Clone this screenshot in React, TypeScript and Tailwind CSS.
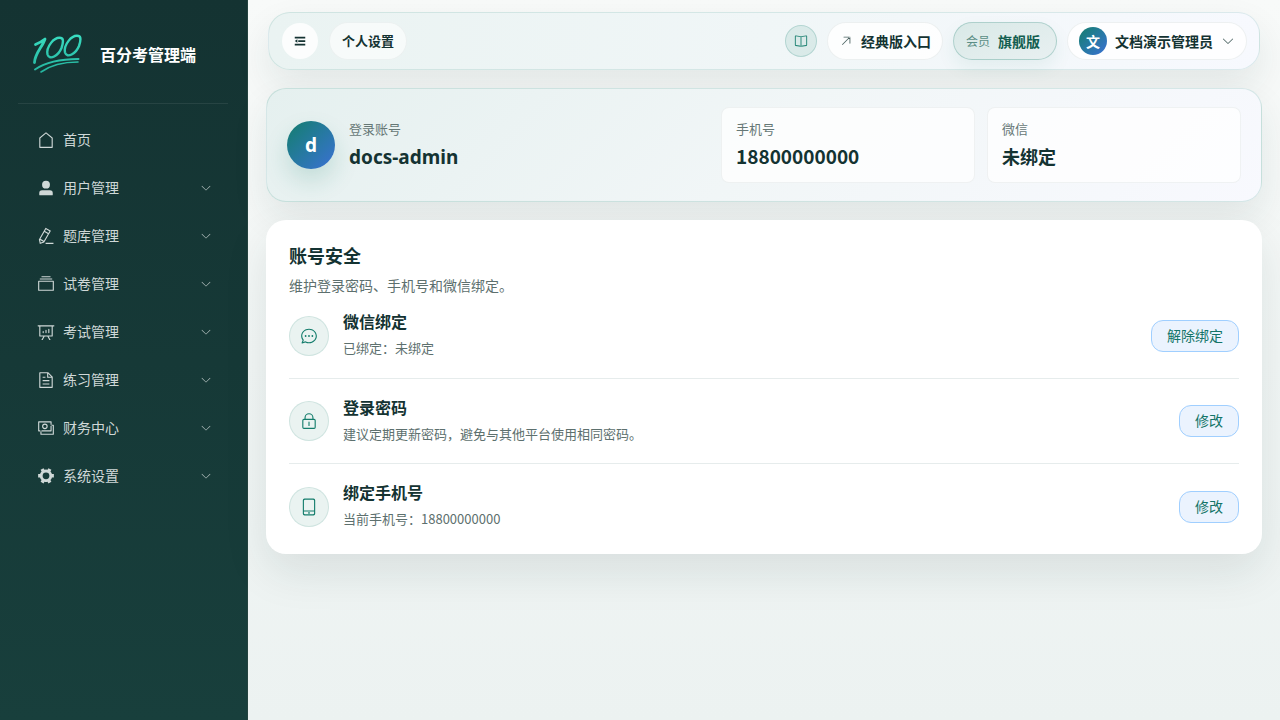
import type { ReactNode } from 'react';

const PATHS: Record<string, string> = {
  house:
    'M192 413.952V896h640V413.952L512 147.328 192 413.952zM139.52 374.4l352-293.312a32 32 0 0 1 40.96 0l352 293.312A32 32 0 0 1 896 398.976V928a32 32 0 0 1-32 32H160a32 32 0 0 1-32-32V398.976a32 32 0 0 1 11.52-24.576z',
  user: 'M288 320a224 224 0 1 0 448 0 224 224 0 1 0-448 0zm544 608H160a32 32 0 0 1-32-32v-96a160 160 0 0 1 160-160h448a160 160 0 0 1 160 160v96a32 32 0 0 1-32 32z',
  pen: 'm199.04 672.64 193.984 112 224-387.968-193.92-112-224 388.032zm-23.872 60.16 32.896 148.288 144.896-45.696L175.168 732.8zM455.04 229.248l193.92 112 56.704-98.112-193.984-112-56.64 98.112zM104.32 708.8l384-665.024 304.768 175.936L409.152 884.8h.064l-248.448 78.336L104.32 708.8zm384 254.272v-64h448v64h-448z',
  files:
    'M128 384v448h768V384H128zm-32-64h832a32 32 0 0 1 32 32v512a32 32 0 0 1-32 32H96a32 32 0 0 1-32-32V352a32 32 0 0 1 32-32zm64-128h704v64H160zm96-128h512v64H256z',
  board:
    'm665.216 768 110.848 192h-73.856L591.36 768H433.024L322.176 960H248.32l110.848-192H160a32 32 0 0 1-32-32V192H64a32 32 0 0 1 0-64h896a32 32 0 1 1 0 64h-64v544a32 32 0 0 1-32 32H665.216zM832 192H192v512h640V192zM352 448a32 32 0 0 1 32 32v64a32 32 0 0 1-64 0v-64a32 32 0 0 1 32-32zm160-64a32 32 0 0 1 32 32v128a32 32 0 0 1-64 0V416a32 32 0 0 1 32-32zm160-64a32 32 0 0 1 32 32v192a32 32 0 1 1-64 0V352a32 32 0 0 1 32-32z',
  document:
    'M832 384H576V128H192v768h640V384zm-26.496-64L640 154.496V320h165.504zM160 64h480l256 256v608a32 32 0 0 1-32 32H160a32 32 0 0 1-32-32V96a32 32 0 0 1 32-32zm160 448h384v64H320v-64zm0-192h160v64H320v-64zm0 384h384v64H320v-64z',
  money:
    'M256 640v192h640V384H768v-64h160a32 32 0 0 1 32 32v512a32 32 0 0 1-32 32H224a32 32 0 0 1-32-32V640h64zM128 192v448h640V192H128zm-32-64h704a32 32 0 0 1 32 32v512a32 32 0 0 1-32 32H96a32 32 0 0 1-32-32V160a32 32 0 0 1 32-32zM448 576a160 160 0 1 1 0-320 160 160 0 0 1 0 320zm0-64a96 96 0 1 0 0-192 96 96 0 0 0 0 192z',
  tools:
    'M764.416 254.72a351.68 351.68 0 0 1 86.336 149.184H960v192.064H850.752a351.68 351.68 0 0 1-86.336 149.312l54.72 94.72-166.272 96-54.592-94.72a352.64 352.64 0 0 1-172.48 0L371.136 936l-166.272-96 54.72-94.72a351.68 351.68 0 0 1-86.336-149.312H64v-192h109.248a351.68 351.68 0 0 1 86.336-149.312L204.8 160l166.208-96h.192l54.656 94.592a352.64 352.64 0 0 1 172.48 0L652.8 64h.128L819.2 160l-54.72 94.72zM704 499.968a192 192 0 1 0-384 0 192 192 0 0 0 384 0z',
  down: 'M831.872 340.864 512 652.672 192.128 340.864a30.592 30.592 0 0 0-42.752 0 29.12 29.12 0 0 0 0 41.6L489.664 714.24a32 32 0 0 0 44.672 0l340.288-331.712a29.12 29.12 0 0 0 0-41.728 30.592 30.592 0 0 0-42.752 0z',
  fold: 'M896 192H128v128h768V192zm0 256H384v128h512V448zm0 256H128v128h768V704zM320 384 128 512l192 128V384z',
  reading:
    'm512 863.36 384-54.848v-638.72L525.568 222.72a96 96 0 0 1-27.136 0L128 169.792v638.72l384 54.848zM137.024 106.432l370.432 52.928a32 32 0 0 0 9.088 0l370.432-52.928A64 64 0 0 1 960 169.792v638.72a64 64 0 0 1-54.976 63.36l-388.48 55.488a32 32 0 0 1-9.088 0l-388.48-55.488A64 64 0 0 1 64 808.512v-638.72a64 64 0 0 1 73.024-63.36zM480 192h64v704h-64z',
  topRight:
    'M768 256H353.6a32 32 0 1 1 0-64H800a32 32 0 0 1 32 32v448a32 32 0 0 1-64 0V256zM777.344 201.344a32 32 0 0 1 45.312 45.312l-544 544a32 32 0 0 1-45.312-45.312l544-544z',
  chat: 'm174.72 855.68 135.296-45.12 23.68 11.84C388.096 849.536 448.576 864 512 864c211.84 0 384-166.784 384-352S723.84 160 512 160 128 326.784 128 512c0 69.12 24.96 139.264 70.848 199.232l22.08 28.8-46.272 115.584zm-45.248 82.56A32 32 0 0 1 89.6 896l58.368-145.92C94.72 680.32 64 596.864 64 512 64 299.904 256 96 512 96s448 203.904 448 416-192 416-448 416a461.056 461.056 0 0 1-206.912-48.384l-175.616 58.56zM512 563.2a51.2 51.2 0 1 1 0-102.4 51.2 51.2 0 0 1 0 102.4zM704 563.2a51.2 51.2 0 1 1 0-102.4 51.2 51.2 0 0 1 0 102.4zM320 563.2a51.2 51.2 0 1 1 0-102.4 51.2 51.2 0 0 1 0 102.4z',
  lock: 'M224 448a32 32 0 0 0-32 32v384a32 32 0 0 0 32 32h576a32 32 0 0 0 32-32V480a32 32 0 0 0-32-32H224zm0-64h576a96 96 0 0 1 96 96v384a96 96 0 0 1-96 96H224a96 96 0 0 1-96-96V480a96 96 0 0 1 96-96zM512 544a32 32 0 0 1 32 32v192a32 32 0 1 1-64 0V576a32 32 0 0 1 32-32zm192-160v-64a192 192 0 1 0-384 0v64h384zM512 64a256 256 0 0 1 256 256v64H256V320A256 256 0 0 1 512 64z',
  phone:
    'M224 768v96.064a64 64 0 0 0 64 64h448a64 64 0 0 0 64-64V768H224zm0-64h576V160a64 64 0 0 0-64-64H288a64 64 0 0 0-64 64v544zm32 288a96 96 0 0 1-96-96V128a96 96 0 0 1 96-96h512a96 96 0 0 1 96 96v768a96 96 0 0 1-96 96H256zm304-144a48 48 0 1 1-96 0 48 48 0 0 1 96 0z',
};

function Icon({ name, className }: { name: string; className: string }) {
  return (
    <svg viewBox="0 0 1024 1024" fill="currentColor" fillRule="evenodd" aria-hidden="true" className={`shrink-0 ${className}`}>
      <path d={PATHS[name]} />
    </svg>
  );
}

function Logo() {
  return (
    <svg viewBox="0 0 54 44" fill="none" strokeLinecap="round" strokeLinejoin="round" aria-hidden="true" className="h-11 w-[54px] shrink-0">
      <defs>
        <linearGradient id="logo" x1="0" y1="0" x2="0" y2="44" gradientUnits="userSpaceOnUse">
          <stop offset="0" stopColor="#3be0c4" />
          <stop offset="1" stopColor="#22b09a" />
        </linearGradient>
      </defs>
      <g stroke="url(#logo)">
        <path strokeWidth="2.8" d="M5.500 12.500C9 11 12.500 9 15 7 12.500 15 5 21 4.500 30.500" />
        <path strokeWidth="2.4" d="M31 6C24 4.500 16 15 17.500 22.500c2 6.500 11 1 14-6.500C33.500 10 33.500 6.500 31 6z" />
        <path strokeWidth="2.4" d="M48.500 4C41.500 2.500 33.500 13 35 20.500c2 6.500 11 1 14-6.500C51 8 51 4.500 48.500 4z" />
        <path strokeWidth="2" d="M5 37.500C16 30 30 27 48.500 27" />
        <path strokeWidth="1.600" d="M11 40C20 33.500 33 30 48 30" />
      </g>
    </svg>
  );
}

const MENU = [
  { icon: 'house', label: '首页', group: false },
  { icon: 'user', label: '用户管理', group: true },
  { icon: 'pen', label: '题库管理', group: true },
  { icon: 'files', label: '试卷管理', group: true },
  { icon: 'board', label: '考试管理', group: true },
  { icon: 'document', label: '练习管理', group: true },
  { icon: 'money', label: '财务中心', group: true },
  { icon: 'tools', label: '系统设置', group: true },
];

const SECURITY = [
  { icon: 'chat', title: '微信绑定', text: '已绑定：未绑定', action: '解除绑定' },
  { icon: 'lock', title: '登录密码', text: '建议定期更新密码，避免与其他平台使用相同密码。', action: '修改' },
  { icon: 'phone', title: '绑定手机号', text: '当前手机号：18800000000', action: '修改' },
];

function Sidebar() {
  return (
    <aside className="w-[248px] shrink-0 border-r border-[#24433f] bg-linear-to-b from-[#143332] to-[#183f3c] px-[18px]">
      <div className="mr-px flex h-[104px] items-center gap-4 border-b border-white/8 pl-3 pt-1">
        <Logo />
        <span className="text-base font-bold text-white">百分考管理端</span>
      </div>
      <nav className="pt-3">
        <ul>
          {MENU.map((item) => (
            <li key={item.label}>
              <button type="button" className="flex h-12 w-full items-center gap-2 pl-[19px] pr-[17px] text-left text-sm text-[#cfd8d7]">
                <Icon name={item.icon} className="size-[18px]" />
                <span className="flex-1 pb-0.5">{item.label}</span>
                {item.group && <Icon name="down" className="size-3 opacity-85" />}
              </button>
            </li>
          ))}
        </ul>
      </nav>
    </aside>
  );
}

function TopBar() {
  return (
    <header className="mx-0.5 flex h-[58px] items-center rounded-[22px] border border-[#147d6c]/12 bg-linear-to-r from-[#eaf3f2] via-[#f0f6f7] to-[#f7f9fe] pl-[13px] pr-3 shadow-[0_16px_36px_rgba(20,51,50,0.09)]">
      <button type="button" aria-label="折叠菜单" className="flex size-9 items-center justify-center rounded-full bg-white/85 text-[#143332]">
        <Icon name="fold" className="size-[14px]" />
      </button>
      <h1 className="ml-[11px] flex h-[38px] items-center rounded-full border border-[#143332]/5 bg-white/60 px-3 text-[13px] font-bold text-[#143332]">个人设置</h1>
      <div className="ml-auto flex items-center gap-[10px]">
        <button type="button" aria-label="文档" className="flex size-8 items-center justify-center rounded-full border border-[#147d6c]/20 bg-[#147d6c]/10 text-[#147d6c]">
          <Icon name="reading" className="size-[14px]" />
        </button>
        <a href="#classic" className="flex h-[38px] items-center gap-2 rounded-full border border-[#143332]/7 bg-white/85 px-[11px] text-sm font-bold text-[#143332]">
          <Icon name="topRight" className="size-[14px] text-[#4a6261]" />
          经典版入口
        </a>
        <button type="button" className="flex h-[38px] items-center gap-2 rounded-full border border-[#147d6c]/25 bg-linear-to-br from-[#d9e9e7] to-[#e8f0f1] pl-3 pr-4 text-[#125e50] shadow-[0_8px_18px_rgba(20,125,108,0.08)]">
          <span className="text-xs text-[#5b8e86]">会员</span>
          <span className="text-sm font-bold">旗舰版</span>
        </button>
        <button type="button" className="flex h-[38px] items-center rounded-full border border-[#143332]/7 bg-white/85 px-[11px] text-sm font-bold text-[#143332]">
          <span className="mr-2 flex size-7 items-center justify-center rounded-full bg-linear-to-br from-[#147d6c] to-[#3b6fd4] text-sm text-white">文</span>
          文档演示管理员
          <Icon name="down" className="ml-2 size-[14px] text-[#4a6261]" />
        </button>
      </div>
    </header>
  );
}

function Info({ label, children }: { label: string; children: ReactNode }) {
  return (
    <div className="flex min-w-0 flex-col gap-1">
      <dt className="text-[13px] leading-5 text-[#667876]">{label}</dt>
      <dd className="pb-0.5 text-[18px] font-bold leading-[26px] text-[#143332]">{children}</dd>
    </div>
  );
}

function Account() {
  return (
    <section className="mt-[18px] rounded-[20px] border border-[#147d6c]/15 bg-linear-135 from-[#e5f0ef] via-[#f1f6f7] to-[#f8f9fe] px-5 py-[18px] shadow-[0_16px_36px_rgba(20,51,50,0.09)]">
      <dl className="grid grid-cols-[1fr_254px_254px] items-center gap-3">
        <div className="flex items-center gap-[14px]">
          <span className="flex size-12 items-center justify-center rounded-full bg-linear-to-br from-[#147d6c] to-[#3b6fd4] font-['Noto_Sans',sans-serif] text-[19px] font-bold text-white shadow-[0_12px_24px_rgba(20,125,108,0.18)]">
            d
          </span>
          <Info label="登录账号">
            <span className="font-['Noto_Sans',sans-serif] text-[19px]">docs-admin</span>
          </Info>
        </div>
        <div className="rounded-lg border border-[#143332]/6 bg-white/75 px-[14px] py-[11px]">
          <Info label="手机号">
            <span className="text-[19px]">18800000000</span>
          </Info>
        </div>
        <div className="rounded-lg border border-[#143332]/6 bg-white/75 px-[14px] py-[11px]">
          <Info label="微信">未绑定</Info>
        </div>
      </dl>
    </section>
  );
}

function Security() {
  return (
    <section className="mt-[18px] rounded-[20px] bg-white px-[23px] pb-[5px] pt-[21px] shadow-[0_18px_44px_rgba(20,51,50,0.1)]">
      <h2 className="text-[18px] font-bold leading-7 text-[#143332]">账号安全</h2>
      <p className="mt-1 text-sm leading-6 text-[#5d706e]">维护登录密码、手机号和微信绑定。</p>
      <ul className="-mt-1 divide-y divide-[#e6ecec]">
        {SECURITY.map((row) => (
          <li key={row.title} className="flex h-[85px] items-center gap-[14px] first:h-[86px]">
            <span className="flex size-10 items-center justify-center rounded-full border border-[#147d6c]/12 bg-[#eaf3f1] text-[#147d6c]">
              <Icon name={row.icon} className="size-[18px]" />
            </span>
            <div className="flex-1 pb-1">
              <h3 className="text-base font-bold leading-6 text-[#143332]">{row.title}</h3>
              <p className="mt-[5px] text-[13px] leading-5 text-[#5d706e]">{row.text}</p>
            </div>
            <button type="button" className="h-8 rounded-xl border border-[#a0cfff] bg-[#ebf3fe] px-[15px] pb-0.5 text-sm text-[#147568]">
              {row.action}
            </button>
          </li>
        ))}
      </ul>
    </section>
  );
}

export default function App() {
  return (
    <div className="flex min-h-screen bg-white font-['Noto_Sans_CJK_SC',sans-serif]">
      <Sidebar />
      <main className="min-w-0 flex-1 bg-linear-to-b from-[#f8faf9] to-[#ecf2f1] px-[18px] pb-6 pt-3">
        <TopBar />
        <Account />
        <Security />
      </main>
    </div>
  );
}
